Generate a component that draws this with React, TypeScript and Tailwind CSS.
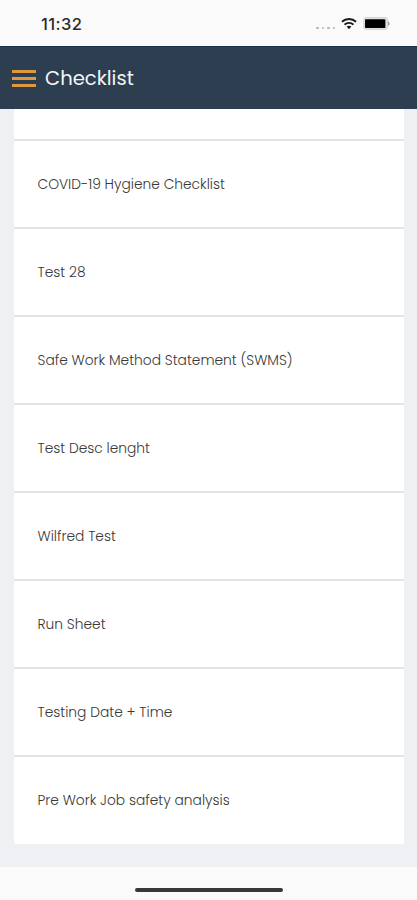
const CHECKLISTS = [
  'COVID-19 Hygiene Checklist',
  'Test 28',
  'Safe Work Method Statement (SWMS)',
  'Test Desc lenght',
  'Wilfred Test',
  'Run Sheet',
  'Testing Date + Time',
  'Pre Work Job safety analysis',
];

function WifiIcon() {
  return (
    <svg width="16" height="13" viewBox="0 0 17 13" fill="none" stroke="#1a1a1a" strokeWidth="2">
      <path d="M1 4.7C5.2 0.7 11.8 0.7 16 4.7" />
      <path d="M3.7 7.7C6.4 5.2 10.6 5.2 13.3 7.7" />
      <path d="M6 9.8C7.4 8.7 9.6 8.7 11 9.8L8.5 12.6Z" fill="#1a1a1a" stroke="none" />
    </svg>
  );
}

function BatteryIcon() {
  return (
    <svg width="27" height="13" viewBox="0 0 27 13">
      <rect x="0.7" y="0.7" width="23.6" height="11.6" rx="2.5" fill="#e6e6e6" stroke="#d6d6d6" strokeWidth="1.2" />
      <rect x="2" y="2.2" width="20.4" height="8.8" rx="0.8" fill="#000" />
      <path d="M25 4.2C27 4.8 27 8.2 25 8.8Z" fill="#999" />
    </svg>
  );
}

function StatusBar() {
  return (
    <div className="flex h-[46px] shrink-0 items-center justify-between bg-[#fafafa] pr-[27px] pl-[41px]">
      <span className="pt-px font-['Inter',sans-serif] text-[16.5px] leading-5 font-medium tracking-[0.4px] text-[#2a2a2a]">
        11:32
      </span>
      <div className="flex items-center pt-px">
        <div className="mt-[9px] mr-1.5 flex gap-[3px]">
          {Array.from({ length: 4 }).map((_, i) => (
            <span key={i} className="size-[2.5px] rounded-full bg-[#b5b5b5]" />
          ))}
        </div>
        <WifiIcon />
        <div className="ml-1.5">
          <BatteryIcon />
        </div>
      </div>
    </div>
  );
}

function Header() {
  return (
    <header className="flex h-[63px] shrink-0 items-center border-t border-[#1b3148] bg-[#2d3e50] pl-3">
      <button type="button" aria-label="Menu" className="flex w-6 flex-col gap-1">
        <span className="h-[3px] bg-[#e0983c]" />
        <span className="h-[3px] bg-[#e0983c]" />
        <span className="h-[3px] bg-[#e0983c]" />
      </button>
      <h1 className="ml-[9px] text-[19.6px] leading-6 font-normal text-[#f4f6f8]">Checklist</h1>
    </header>
  );
}

export default function App() {
  return (
    <div className="flex h-[900px] w-[417px] flex-col overflow-hidden bg-[#fafafa] font-['Poppins','Inter',sans-serif]">
      <StatusBar />
      <Header />
      <main className="h-[758px] shrink-0 bg-[#eff0f4] pr-[13px] pl-3.5">
        <ul className="flex h-[735px] flex-col rounded-b-[2px] bg-white">
          {/* tail of the row scrolled under the header */}
          <li className="h-[30px] shrink-0" />
          {CHECKLISTS.map((title) => (
            <li key={title} className="flex h-[88px] shrink-0 items-center border-t-2 border-[#e3e4e6] pt-0.5 pl-[23.5px]">
              <span className="text-[13.8px] leading-5 font-light whitespace-nowrap text-[#383838]">{title}</span>
            </li>
          ))}
        </ul>
      </main>
      <footer className="flex flex-1 justify-center pt-[21px]">
        <div className="h-1 w-[148px] rounded-full bg-[#383838]" />
      </footer>
    </div>
  );
}
